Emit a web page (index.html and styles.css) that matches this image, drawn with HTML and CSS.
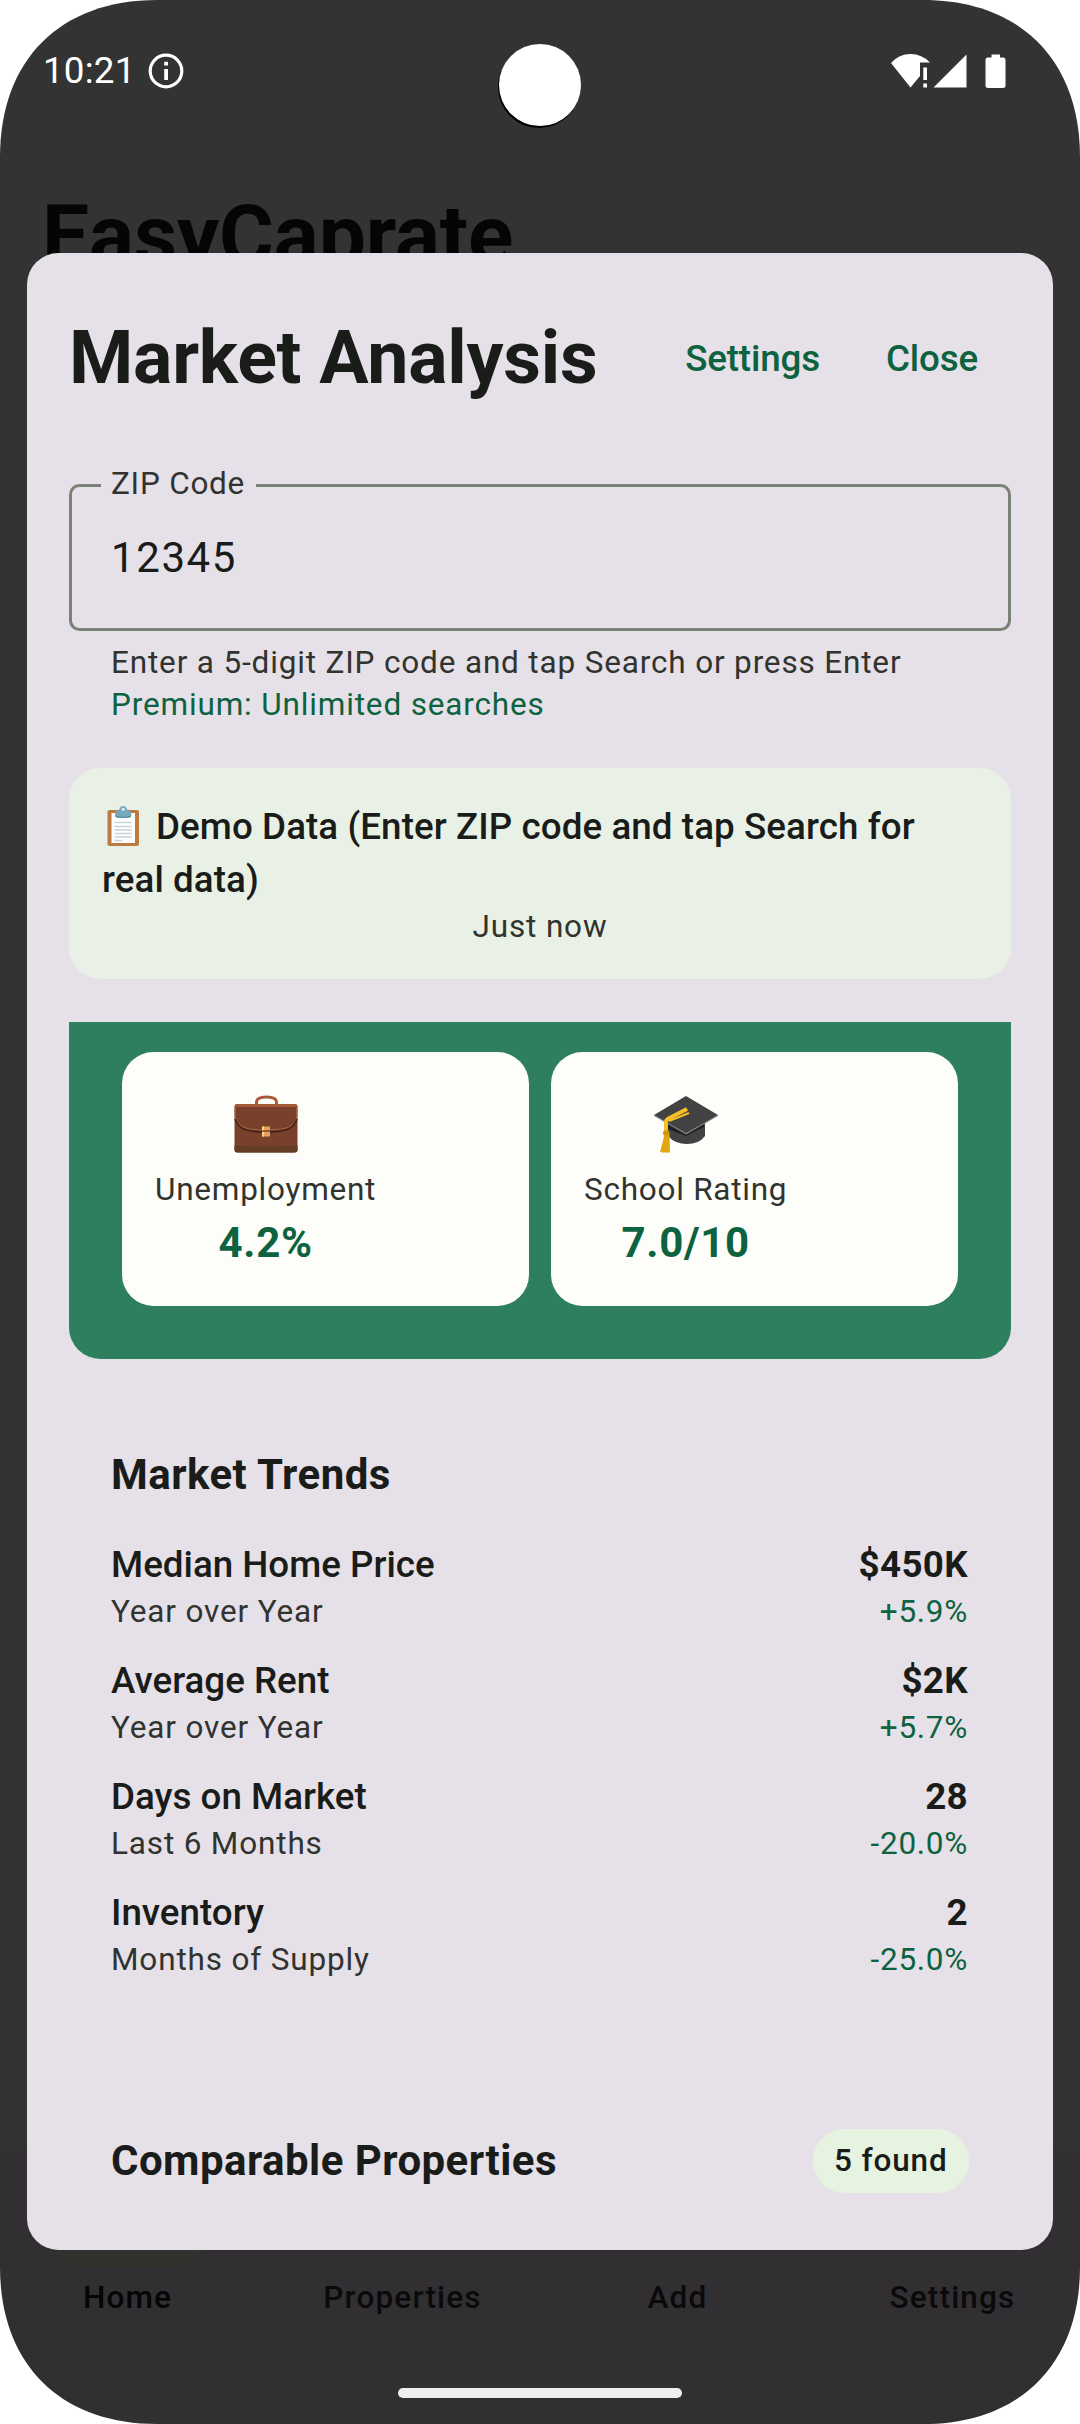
FILE: index.html
```html
<!DOCTYPE html>
<html lang="en">
<head>
<meta charset="utf-8">
<title>Market Analysis</title>
<link rel="stylesheet" href="styles.css">
</head>
<body>
<div class="screen">
  <header class="status">
    <div class="status-left">
      <span class="time">10:21</span>
      <svg class="info" width="36" height="36" viewBox="0 0 36 36"><circle cx="18" cy="18" r="15.8" fill="none" stroke="#fff" stroke-width="3.2"/><path d="M16.2 8.8h3.8v3.8h-3.8zM16.2 16h3.8v11h-3.8z" fill="#fff"/></svg>
    </div>
    <svg class="signals" width="116" height="36" viewBox="0 0 116 36" fill="#fff"><path d="M0 10Q8 1 19.5 1T39 9.5H29V23L19.5 34.500z"/><path d="M32.300 14.500h3.700V27h-3.700zM32.300 30.500h3.700V34.500h-3.700zM75.500 1.500V34.500H42.500z"/><path d="M100.500 1.500h8.500V4.500h3q2.500 0 2.500 2.500V33q0 2-2.500 2H97q-2.500 0-2.500-2V7q0-2.500 2.500-2.500h3.500z"/></svg>
  </header>
  <div class="camera"></div>
  <h1 class="app-title">EasyCaprate</h1>

  <nav class="tabs">
    <span class="tab home">Home</span>
    <span class="tab">Properties</span>
    <span class="tab">Add</span>
    <span class="tab">Settings</span>
  </nav>
  <div class="gesture"></div>

  <main class="dialog">
    <div class="head">
      <h2>Market Analysis</h2>
      <div class="actions"><a>Settings</a><a>Close</a></div>
    </div>

    <div class="field"><span class="field-label">ZIP Code</span><span class="field-value">12345</span></div>
    <div class="help">
      <p>Enter a 5-digit ZIP code and tap Search or press Enter</p>
      <p class="green">Premium: Unlimited searches</p>
    </div>

    <section class="demo">
      <p class="demo-text"><svg class="clip" width="33" height="42" viewBox="0 0 33 42"><rect x="0.500" y="5" width="31.500" height="36" rx="2" fill="#bd7a42"/><path d="M4.500 8h23.500v30H4.500z" fill="#fff"/><path d="M7.500 17.500h17M7.500 21.500h17M7.500 25h17M7.500 28.500h17M7.500 32h17M7.500 35.500h8" stroke="#c9d2d6" stroke-width="1.400"/><path d="M8 11V9q0-3 4-4 1-4 4.200-4t4.200 4q4 1 4 4v2q-1 1.500-3 1.500H11q-2 0-3-1.500z" fill="#75aabc"/><path d="M8 10.800q8 2 16.400 0-1 2-3 2H11q-2 0-3-2z" fill="#4f8599"/><circle cx="16.200" cy="4.200" r="1.500" fill="#e9f1e6"/></svg>Demo Data (Enter ZIP code and tap Search for real data)</p>
      <p class="demo-time">Just now</p>
    </section>

    <section class="stats">
      <article class="stat">
        <div class="stat-body">
          <svg width="64" height="58" viewBox="0 0 64 58"><path d="M22.500 11V7q0-5 10-5t10 5v4" fill="none" stroke="#a65a38" stroke-width="3"/><rect x="0.500" y="9" width="63" height="48.500" rx="3" fill="#79412b"/><path d="M3.500 9h57q3 0 3 3H.5q0-3 3-3z" fill="#a25935"/><path d="M.5 50.500q31 2 63 0V55q0 2.500-3 2.500h-57q-3 0-3-2.500z" fill="#643c24"/><path d="M1.200 12v9q0 7 8 11 6 3 22.800 3t22.800-3q8-4 8-11v-9" fill="none" stroke="#a0663b" stroke-width="1.200"/><path d="M1 24q3 8 10 10.500 7 2.500 21 2.500t21-2.500q7-2.500 10-10.500" fill="none" stroke="#452119" stroke-width="1.600"/><path d="M28 31.500h8v10h-8z" fill="#e7a15c"/><path d="M28 31.500h2v10h-2z" fill="#ffd182"/><path d="M28 35.300h8v1.400h-8z" fill="#6b3a20"/></svg>
          <span class="stat-name">Unemployment</span>
          <strong>4.2%</strong>
        </div>
      </article>
      <article class="stat">
        <div class="stat-body">
          <svg width="64" height="58" viewBox="0 0 64 58"><path d="M14 27v14q7 8 19 8t18-8V26z" fill="#424242"/><path d="M14 29v5l18 7 18-9v-4z" fill="#212121"/><path d="M0 20 32 1l32 19-32 19z" fill="#424242"/><path d="M0 20v1l32 18.500L64 21v-1L32 38z" fill="#858585"/><ellipse cx="31.500" cy="15" rx="2.500" ry="1.600" fill="#616161"/><path d="M33 14 14.500 23.500q-2.500 1.300-2.500 3.500v12" fill="none" stroke="#f8c027" stroke-width="4"/><path d="m35 18-20 8" stroke="#f8c027" stroke-width="2"/><path d="M10 39h5.500l.5 18.500H9z" fill="#e2a610"/><path d="m10 42-4 15 4 .5z" fill="#e2a610"/><rect x="9" y="35.500" width="6.500" height="5" rx="2" fill="#d0960c"/></svg>
          <span class="stat-name">School Rating</span>
          <strong>7.0/10</strong>
        </div>
      </article>
    </section>

    <section class="trends">
      <h3>Market Trends</h3>
      <div class="trend"><div><b>Median Home Price</b><small>Year over Year</small></div><div class="right"><strong>$450K</strong><small class="green">+5.9%</small></div></div>
      <div class="trend"><div><b>Average Rent</b><small>Year over Year</small></div><div class="right"><strong>$2K</strong><small class="green">+5.7%</small></div></div>
      <div class="trend"><div><b>Days on Market</b><small>Last 6 Months</small></div><div class="right"><strong>28</strong><small class="green">-20.0%</small></div></div>
      <div class="trend"><div><b>Inventory</b><small>Months of Supply</small></div><div class="right"><strong>2</strong><small class="green">-25.0%</small></div></div>
    </section>

    <section class="comps">
      <h3>Comparable Properties</h3>
      <span class="chip">5 found</span>
    </section>
  </main>
</div>
</body>
</html>
```

FILE: styles.css
```css
* { box-sizing: border-box; }
body { margin: 0; background: #fff; font-family: Roboto, "Liberation Sans", sans-serif; color: #1a1c19; }
h1, h2, h3, p { margin: 0; }
.screen { position: relative; width: 1080px; height: 2424px; overflow: hidden; background: linear-gradient(#333 2151px, #322f33 2151px); clip-path: path("M0 157C0 60 60 0 157 0H923C1020 0 1080 60 1080 157V2267C1080 2364 1020 2424 923 2424H157C60 2424 0 2364 0 2267Z"); }

.status { display: flex; justify-content: space-between; padding: 53px 73px 0 43px; height: 190px; }
.status-left { display: flex; gap: 12px; height: 36px; align-items: center; }
.time { font-size: 36.75px; line-height: 36px; color: #fff; letter-spacing: .2px; }
.camera { position: absolute; left: 499px; top: 44px; width: 82px; height: 82px; border-radius: 50%; background: #fff; box-shadow: -1px 2px 0 #000; }
.app-title { padding-left: 42px; font-size: 84px; line-height: 92px; font-weight: 700; color: #050505; letter-spacing: -.15px; }

.dialog { position: absolute; left: 27px; top: 253px; width: 1026px; height: 1997px; border-radius: 31.5px; background: #e6e1e8; padding: 63px 42px 0; display: flex; flex-direction: column; overflow: hidden; }
.head { display: flex; justify-content: space-between; align-items: center; height: 84px; margin-bottom: 84px; }
.head h2 { font-size: 73.5px; line-height: 84px; font-weight: 700; letter-spacing: -.25px; }
.actions { display: flex; gap: 66px; padding-right: 33px; font-size: 36.75px; font-weight: 500; color: #0d6240; letter-spacing: -.15px; }
.green { color: #0d6240; }

.field { position: relative; height: 147px; border: 3px solid #7c8177; border-radius: 10.5px; padding: 43px 39px; flex: none; }
.field-label { position: absolute; left: 29px; top: -24px; padding: 0 11px 0 10px; line-height: 42px; font-size: 31.5px; letter-spacing: .75px; color: #31332f; background: #e6e1e8; }
.field-value { display: block; font-size: 42px; line-height: 56px; letter-spacing: 1.6px; }
.help { padding: 11px 42px 0; height: 137px; font-size: 31.5px; line-height: 42px; letter-spacing: .84px; color: #31332f; flex: none; }
.help .green { color: #0d6240; }

.demo { height: 211px; background: #e9f1e6; border-radius: 31.5px; padding: 33px 33px 0; flex: none; margin-bottom: 43px; }
.demo-text { font-size: 36.75px; line-height: 52.5px; font-weight: 500; letter-spacing: .08px; }
.clip { margin: 0 16px 0 5px; vertical-align: -8px; }
.demo-time { text-align: center; font-size: 31.5px; line-height: 42px; letter-spacing: .84px; color: #31332f; }

.stats { height: 337px; flex: none; background: #2d7f5e; border-radius: 0 0 31.5px 31.5px; padding: 30px 53px 0; display: flex; gap: 22px; }
.stat { flex: 1; height: 254px; border-radius: 31.5px; background: #fdfef9; padding: 43px 33px 0; }
.stat-body { display: inline-flex; flex-direction: column; align-items: center; }
.stat-name { margin-top: 16px; font-size: 31.5px; line-height: 42px; letter-spacing: .75px; color: #31332f; }
.stat strong { font-size: 42px; line-height: 63px; color: #0d6240; letter-spacing: .65px; }

.trends { padding: 84px 43px 0 42px; height: 727px; flex: none; }
h3 { font-size: 42px; line-height: 63px; font-weight: 700; letter-spacing: .45px; }
.trends h3 { margin-bottom: 33px; }
.trend { display: flex; justify-content: space-between; height: 116px; }
.trend div { display: flex; flex-direction: column; }
.trend b, .trend strong { font-size: 36.75px; line-height: 52px; }
.trend b { font-weight: 500; }
.trend strong { font-weight: 700; letter-spacing: .35px; }
.trend small { font-size: 31.5px; line-height: 42px; letter-spacing: .84px; color: #31332f; }
.trend small.green { color: #0d6240; letter-spacing: .7px; }
.right { align-items: flex-end; }

.comps { display: flex; align-items: center; justify-content: space-between; padding: 1px 42px 0; height: 64px; margin-top: 42px; flex: none; }
.chip { border-radius: 31.5px; background: #e7f3e1; height: 64px; padding: 0 21.5px; font-size: 31.5px; line-height: 63px; font-weight: 500; letter-spacing: .84px; }

.tabs { position: absolute; left: 0; right: 0; top: 2250px; height: 90px; padding-top: 27px; display: grid; grid-template-columns: repeat(4, 275px); justify-content: center; text-align: center; color: #0a0a0a; font-size: 31.5px; line-height: 42px; font-weight: 500; letter-spacing: 1.15px; }
.tab { position: relative; }
.home { color: #040504; }
.home::before { content: ""; position: absolute; z-index: -1; left: 54px; top: -94px; width: 168px; height: 84px; border-radius: 42px; background: #30322e; }
.tabs { z-index: 0; }
.dialog { z-index: 1; }
.gesture { position: absolute; left: 398px; top: 2388px; width: 284px; height: 10px; border-radius: 5px; background: #eee; }
```
